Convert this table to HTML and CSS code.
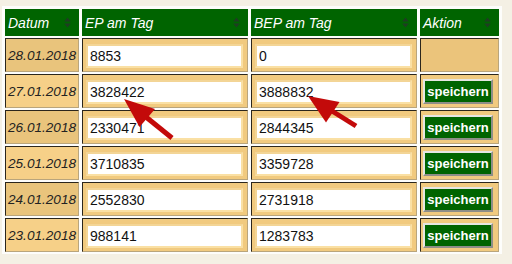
FILE: index.html
```html
<!DOCTYPE html>
<html lang="de">
<head>
<meta charset="utf-8">
<title>EP am Tag</title>
<link rel="stylesheet" href="styles.css">
</head>
<body>
<table class="grid">
  <colgroup>
    <col class="c-date"><col class="c-ep"><col class="c-bep"><col class="c-act">
  </colgroup>
  <thead>
    <tr class="head">
      <th><div class="th-in"><span>Datum</span><svg class="sort" viewBox="0 0 7 11" width="7" height="11"><path d="M3.5 0.5 L6.8 4.5 L0.2 4.5 Z M3.5 10.5 L6.8 6.5 L0.2 6.5 Z"/></svg></div></th>
      <th><div class="th-in"><span>EP am Tag</span><svg class="sort" viewBox="0 0 7 11" width="7" height="11"><path d="M3.5 0.5 L6.8 4.5 L0.2 4.5 Z M3.5 10.5 L6.8 6.5 L0.2 6.5 Z"/></svg></div></th>
      <th><div class="th-in"><span>BEP am Tag</span><svg class="sort" viewBox="0 0 7 11" width="7" height="11"><path d="M3.5 0.5 L6.8 4.5 L0.2 4.5 Z M3.5 10.5 L6.8 6.5 L0.2 6.5 Z"/></svg></div></th>
      <th><div class="th-in"><span>Aktion</span><svg class="sort" viewBox="0 0 7 11" width="7" height="11"><path d="M3.5 0.5 L6.8 4.5 L0.2 4.5 Z M3.5 10.5 L6.8 6.5 L0.2 6.5 Z"/></svg></div></th>
    </tr>
  </thead>
  <tbody>
    <tr class="row dark">
      <td class="date">28.01.2018</td>
      <td class="val"><input class="field" type="text" value="8853"></td>
      <td class="val"><input class="field" type="text" value="0"></td>
      <td class="act empty"></td>
    </tr>
    <tr class="row light">
      <td class="date">27.01.2018</td>
      <td class="val"><input class="field" type="text" value="3828422"></td>
      <td class="val"><input class="field" type="text" value="3888832"></td>
      <td class="act"><button class="save" type="button">speichern</button></td>
    </tr>
    <tr class="row dark">
      <td class="date">26.01.2018</td>
      <td class="val"><input class="field" type="text" value="2330471"></td>
      <td class="val"><input class="field" type="text" value="2844345"></td>
      <td class="act"><button class="save" type="button">speichern</button></td>
    </tr>
    <tr class="row light">
      <td class="date">25.01.2018</td>
      <td class="val"><input class="field" type="text" value="3710835"></td>
      <td class="val"><input class="field" type="text" value="3359728"></td>
      <td class="act"><button class="save" type="button">speichern</button></td>
    </tr>
    <tr class="row dark">
      <td class="date">24.01.2018</td>
      <td class="val"><input class="field" type="text" value="2552830"></td>
      <td class="val"><input class="field" type="text" value="2731918"></td>
      <td class="act"><button class="save" type="button">speichern</button></td>
    </tr>
    <tr class="row light">
      <td class="date">23.01.2018</td>
      <td class="val"><input class="field" type="text" value="988141"></td>
      <td class="val"><input class="field" type="text" value="1283783"></td>
      <td class="act"><button class="save" type="button">speichern</button></td>
    </tr>
  </tbody>
</table>
<svg class="arrows" viewBox="0 0 512 264" width="512" height="264">
  <g class="arrow">
    <line x1="146" y1="117" x2="172" y2="138"/>
    <path d="M124 99 L139.5 127 L155 109 Z"/>
  </g>
  <g class="arrow">
    <line x1="332" y1="111" x2="356" y2="126"/>
    <path d="M308 96 L326 122.5 L339.5 102 Z"/>
  </g>
</svg>
</body>
</html>
```

FILE: styles.css
```css
html, body {
  margin: 0;
  padding: 0;
  background: #f4f0e4;
  width: 512px;
  height: 264px;
  overflow: hidden;
  position: relative;
}

body {
  font-family: "Liberation Sans", Arial, sans-serif;
  padding: 6px 0 0 2px;
  box-sizing: border-box;
}

.grid {
  table-layout: fixed;
  width: 500px;
  border-collapse: separate;
  border-spacing: 3px 2px;
  padding-top: 1px;
  background: #fdfdfb;
}

.c-date { width: 74px; }
.c-ep { width: 166px; }
.c-bep { width: 166px; }
.c-act { width: 79px; }

.head { height: 27px; }

.head th {
  background: #006400;
  color: #ffffff;
  font-style: italic;
  font-weight: normal;
  font-size: 14px;
  text-align: left;
  padding: 0 8px 0 3px;
  vertical-align: middle;
}

.th-in {
  display: flex;
  align-items: center;
  justify-content: space-between;
}

.sort {
  fill: #1f3d22;
  flex: none;
}

.row { height: 34px; }

.row td {
  border-style: solid;
  border-width: 1px;
  border-color: #2b261c #b9a57c #b9a57c #2b261c;
  vertical-align: middle;
  padding: 0;
}

.date {
  font-style: italic;
  font-size: 13.6px;
  color: #222222;
  padding-left: 2px !important;
  white-space: nowrap;
}

.dark .date { background: #e9c47c; }
.light .date { background: #f6d088; }

.val {
  background: #f1ca7f;
  padding: 4px 4px 3px 3px !important;
}

.field {
  display: block;
  box-sizing: border-box;
  width: 100%;
  height: 24px;
  margin: 0;
  border: 2px solid #fae0a4;
  border-top-color: #f3d596;
  border-left-color: #f3d596;
  background: #ffffff;
  font-family: "Liberation Sans", Arial, sans-serif;
  font-size: 14px;
  color: #111111;
  padding: 0 0 0 2px;
  outline: none;
}

.act {
  background: #f1ca7f;
  padding-left: 2px !important;
}

.act.empty { background: #ebc47b; }

.save {
  display: block;
  box-sizing: border-box;
  width: 70px;
  height: 25px;
  margin: 0;
  padding: 0;
  background: #006400;
  color: #ffffff;
  font-family: "Liberation Sans", Arial, sans-serif;
  font-weight: bold;
  font-size: 13px;
  border: 2px solid;
  border-color: #e6e6e2 #8e8e88 #8e8e88 #e6e6e2;
  text-align: center;
}

.arrows {
  position: absolute;
  left: 0;
  top: 0;
  pointer-events: none;
}

.arrow line {
  stroke: #c30a0a;
  stroke-width: 5;
  stroke-linecap: butt;
}

.arrow path {
  fill: #c30a0a;
}
```
